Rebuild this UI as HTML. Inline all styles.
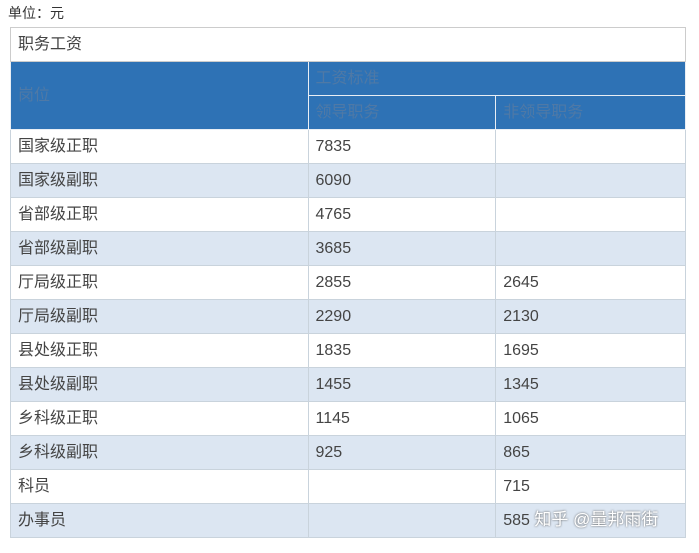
<html><head><style>
body{margin:0;background:#fff;font-family:"Liberation Sans","Noto Sans CJK SC",sans-serif;font-size:14px;color:#444;}
.u{position:absolute;left:8px;top:3px;font-size:14px;color:#333;}
table{position:absolute;left:10px;top:27px;border-collapse:collapse;width:676px;}
td{border:1px solid #c9d3dc;padding:0 0 0 7px;height:34px;line-height:20px;vertical-align:middle;}
.t td{height:34px;border-color:#ccc;}
.h td{background:#2e72b5;color:#4f79a6;border-color:#e8eef5;height:34px;}
tr.a td{background:#dce6f2;}
</style></head><body>
<div class="u">单位：元</div>
<table>
<colgroup><col style="width:298px"><col style="width:188px"><col style="width:190px"></colgroup>
<tr class="t"><td colspan="3">职务工资</td></tr>
<tr class="h"><td rowspan="2">岗位</td><td colspan="2">工资标准</td></tr>
<tr class="h"><td>领导职务</td><td>非领导职务</td></tr>
<tr><td>国家级正职</td><td>7835</td><td></td></tr>
<tr class="a"><td>国家级副职</td><td>6090</td><td></td></tr>
<tr><td>省部级正职</td><td>4765</td><td></td></tr>
<tr class="a"><td>省部级副职</td><td>3685</td><td></td></tr>
<tr><td>厅局级正职</td><td>2855</td><td>2645</td></tr>
<tr class="a"><td>厅局级副职</td><td>2290</td><td>2130</td></tr>
<tr><td>县处级正职</td><td>1835</td><td>1695</td></tr>
<tr class="a"><td>县处级副职</td><td>1455</td><td>1345</td></tr>
<tr><td>乡科级正职</td><td>1145</td><td>1065</td></tr>
<tr class="a"><td>乡科级副职</td><td>925</td><td>865</td></tr>
<tr><td>科员</td><td></td><td>715</td></tr>
<tr class="a"><td>办事员</td><td></td><td>585 <span style="color:#fff;font-size:17px;text-shadow:0 0 2px #555;">知乎 @量邦雨街</span></td></tr>
</table>
</body></html>
